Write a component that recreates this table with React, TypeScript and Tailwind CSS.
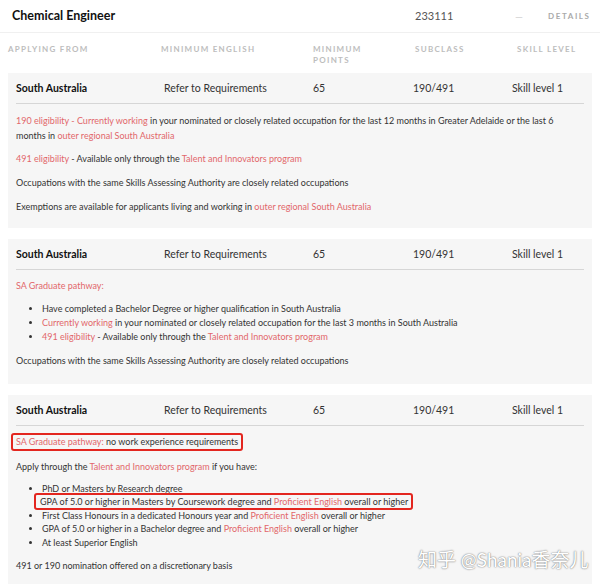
import React from 'react';

const font = { fontFamily: 'Lato, "Noto Sans CJK SC", sans-serif' };

const L: React.FC<{ children: React.ReactNode }> = ({ children }) => (
  <span className="text-[#e2676b]">{children}</span>
);

const RowHead: React.FC = () => (
  <div className="mx-2 grid grid-cols-[148px_149px_100px_99px_1fr] items-center border-b border-[#d6d6d6] pt-[8px] pb-[7px] text-[10.5px] text-[#333]">
    <div className="font-bold text-[#111]">South Australia</div>
    <div>Refer to Requirements</div>
    <div>65</div>
    <div>190/491</div>
    <div>Skill level 1</div>
  </div>
);

const App: React.FC = () => {
  return (
    <div className="relative h-[584px] w-[600px] overflow-hidden bg-white text-[#333]" style={font}>
      {/* occupation title */}
      <div className="flex h-[33px] items-center border-b border-[#f0f0f0] pl-3 pr-[6px]">
        <div className="w-[403px] text-[12.5px] font-bold text-[#111]">Chemical Engineer</div>
        <div className="w-[100px] text-[11px] text-[#555]">233111</div>
        <div className="w-[33px] text-[10px] text-[#ccc]">—</div>
        <div className="text-[8px] font-bold tracking-[0.2em] text-[#aaa]">DETAILS</div>
      </div>

      {/* column headers */}
      <div className="grid h-[40px] grid-cols-[153px_152px_102px_102px_1fr] items-start pl-2 pt-[11px] text-[8px] font-bold leading-[11px] tracking-[0.16em] text-[#bdbdbd]">
        <div>APPLYING FROM</div>
        <div>MINIMUM ENGLISH</div>
        <div>MINIMUM<br />POINTS</div>
        <div>SUBCLASS</div>
        <div>SKILL LEVEL</div>
      </div>

      <div className="flex flex-col gap-[11px] px-2 text-[9px] leading-[15px]">
        {/* card 1 */}
        <div className="h-[155px] bg-[#f6f6f6]">
          <RowHead />
          <div className="px-2 pt-[9px]">
            <p>
              <L>190 eligibility - Currently working</L> in your nominated or closely related occupation for the last 12 months in Greater Adelaide or the last 6 months in <L>outer regional South Australia</L>
            </p>
            <p className="mt-[8px]"><L>491 eligibility</L> - Available only through the <L>Talent and Innovators program</L></p>
            <p className="mt-[9px]">Occupations with the same Skills Assessing Authority are closely related occupations</p>
            <p className="mt-[9px]">Exemptions are available for applicants living and working in <L>outer regional South Australia</L></p>
          </div>
        </div>

        {/* card 2 */}
        <div className="h-[145px] bg-[#f6f6f6]">
          <RowHead />
          <div className="px-2 pt-[8px]">
            <p><L>SA Graduate pathway:</L></p>
            <ul className="mt-[9px] list-disc pl-[26px] leading-[14px]">
              <li>Have completed a Bachelor Degree or higher qualification in South Australia</li>
              <li><L>Currently working</L> in your nominated or closely related occupation for the last 3 months in South Australia</li>
              <li><L>491 eligibility</L> - Available only through the <L>Talent and Innovators program</L></li>
            </ul>
            <p className="mt-[9px]">Occupations with the same Skills Assessing Authority are closely related occupations</p>
          </div>
        </div>

        {/* card 3 */}
        <div className="h-[200px] bg-[#f6f6f6]">
          <RowHead />
          <div className="px-2 pt-[7px]">
            <p>
              <span className="-mx-[5px] inline-block rounded-[3px] border-2 border-[#e3261f] px-[3px] leading-[14px]">
                <L>SA Graduate pathway:</L> no work experience requirements
              </span>
            </p>
            <p className="mt-[8px]">Apply through the <L>Talent and Innovators program</L> if you have:</p>
            <ul className="mt-[8px] list-disc pl-[26px] leading-[13.4px]">
              <li>PhD or Masters by Research degree</li>
              <li className="list-none">
                <span className="-ml-[8px] -my-[3px] inline-block rounded-[3px] border-2 border-[#e3261f] pl-[4px] pr-[3px] leading-[13px]">
                  GPA of 5.0 or higher in Masters by Coursework degree and <L>Proficient English</L> overall or higher
                </span>
              </li>
              <li>First Class Honours in a dedicated Honours year and <L>Proficient English</L> overall or higher</li>
              <li>GPA of 5.0 or higher in a Bachelor degree and <L>Proficient English</L> overall or higher</li>
              <li>At least Superior English</li>
            </ul>
            <p className="mt-[9px]">491 or 190 nomination offered on a discretionary basis</p>
          </div>
        </div>
      </div>

      {/* watermark */}
      <div className="absolute left-[418px] top-[546px] text-[19px] text-white [text-shadow:0_0_1px_#777,0_0_2px_#999]">
        知乎 @Shania香奈儿
      </div>
    </div>
  );
};

export default App;
